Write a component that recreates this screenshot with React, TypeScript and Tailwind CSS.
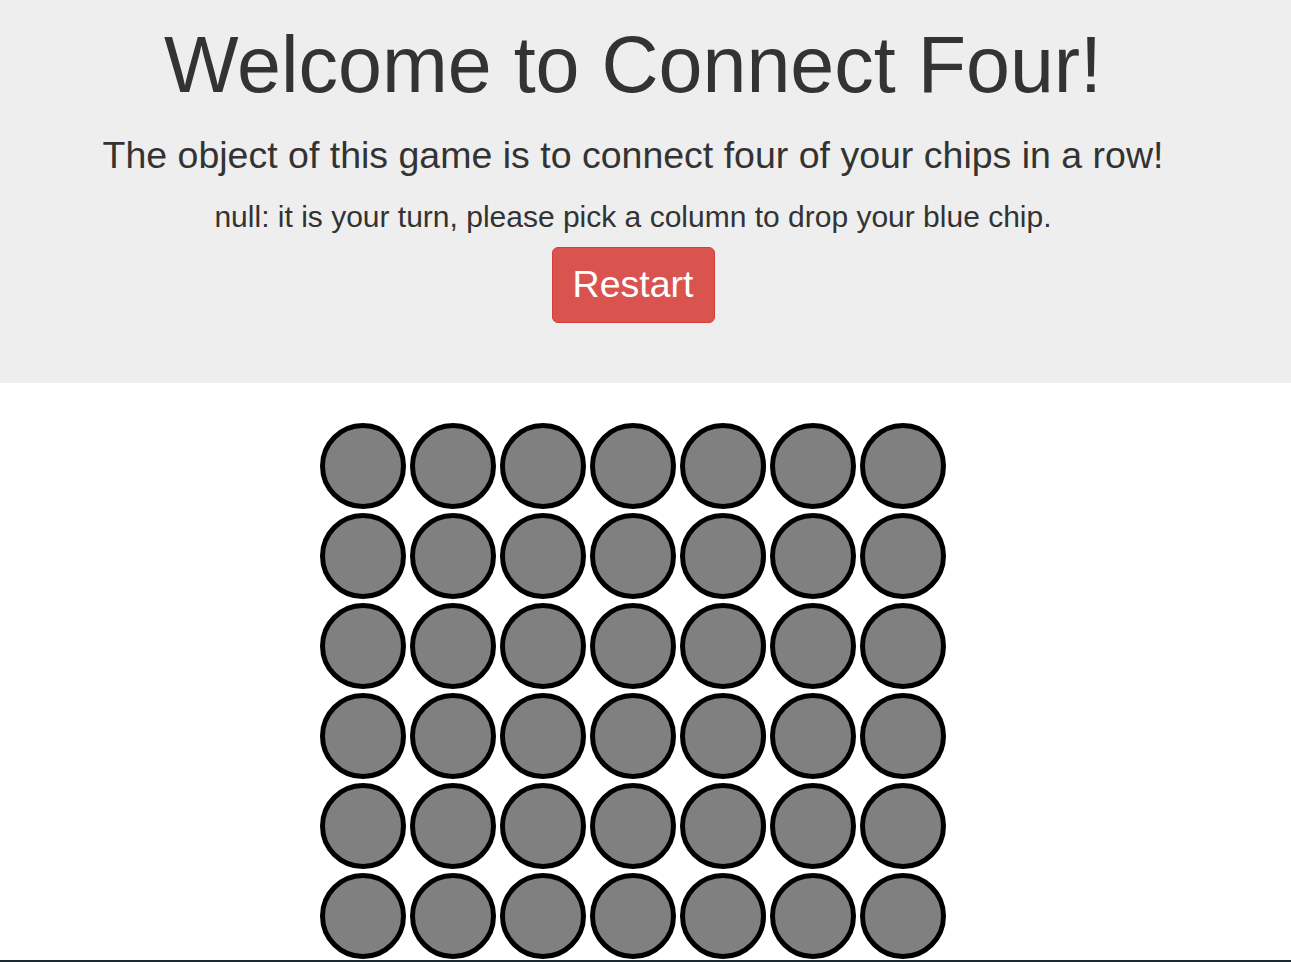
export default function App() {
  const rows = 6;
  const cols = 7;

  return (
    <div className="h-[962px] overflow-hidden bg-white border-b-2 border-[#1b2a30] font-['Liberation_Sans'] text-[#333]">
      <div className="bg-[#eee] pt-[21px] pb-[60px]">
        <div className="w-[1266px] flex flex-col items-center text-center">
          <h1 className="text-[79px] leading-[88px] whitespace-nowrap">Welcome to Connect Four!</h1>
          <p className="mt-[26px] text-[37.5px] leading-[40px] whitespace-nowrap">
            The object of this game is to connect four of your chips in a row!
          </p>
          <p className="mt-[22px] text-[30px] leading-[40px] whitespace-nowrap">
            null: it is your turn, please pick a column to drop your blue chip.
          </p>
          <button className="mt-[10px] w-[163px] h-[76px] rounded-[6px] bg-[#d9534f] border border-[#d43f3a] text-white text-[37.5px] leading-none">
            Restart
          </button>
        </div>
      </div>

      <div className="w-[1266px] flex justify-center mt-[38px]">
        <div className="flex flex-col">
          {Array.from({ length: rows }).map((_, r) => (
            <div key={r} className="flex">
              {Array.from({ length: cols }).map((_, c) => (
                <div
                  key={c}
                  className="m-[2px] w-[86px] h-[86px] rounded-full bg-[#808080] border-[5px] border-black"
                />
              ))}
            </div>
          ))}
        </div>
      </div>
    </div>
  );
}
